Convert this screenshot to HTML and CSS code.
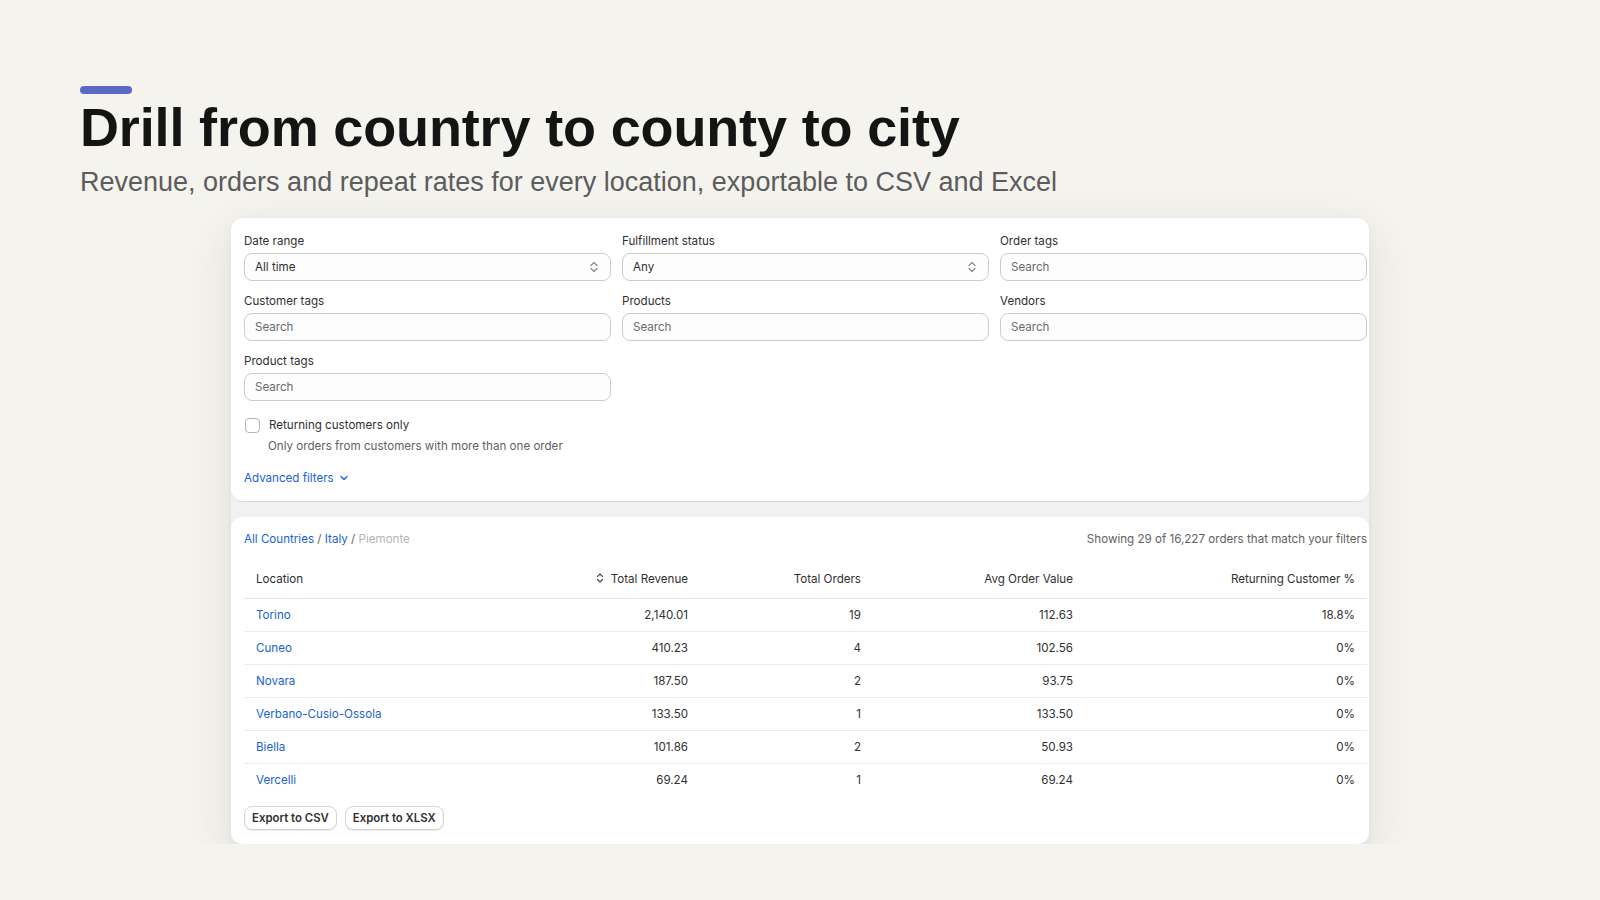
FILE: index.html
```html
<!DOCTYPE html>
<html lang="en">
<head>
    <meta charset="UTF-8">
    <meta name="viewport" content="width=device-width, initial-scale=1.0">
    <title>Drill from country to county to city</title>
    <link rel="stylesheet" href="styles.css">
</head>
<body>
    <div class="hero">
        <div class="accent"></div>
        <h1>Drill from country to county to city</h1>
        <p class="subtitle">Revenue, orders and repeat rates for every location, exportable to CSV and Excel</p>
    </div>

    <div class="frame">
        <div class="filters">
            <div class="filter-grid">
                <div class="field">
                    <label>Date range</label>
                    <div class="input select">
                        <span class="value">All time</span>
                        <svg class="updown" width="8" height="12" viewBox="0 0 8 12"><path d="M1 4.5 4 1.5 7 4.5M1 7.5 4 10.5 7 7.5" fill="none" stroke="#8a8a8a" stroke-width="1.2" stroke-linecap="round" stroke-linejoin="round"/></svg>
                    </div>
                </div>
                <div class="field">
                    <label>Fulfillment status</label>
                    <div class="input select">
                        <span class="value">Any</span>
                        <svg class="updown" width="8" height="12" viewBox="0 0 8 12"><path d="M1 4.5 4 1.5 7 4.5M1 7.5 4 10.5 7 7.5" fill="none" stroke="#8a8a8a" stroke-width="1.2" stroke-linecap="round" stroke-linejoin="round"/></svg>
                    </div>
                </div>
                <div class="field">
                    <label>Order tags</label>
                    <div class="input"><span class="placeholder">Search</span></div>
                </div>
                <div class="field">
                    <label>Customer tags</label>
                    <div class="input"><span class="placeholder">Search</span></div>
                </div>
                <div class="field">
                    <label>Products</label>
                    <div class="input"><span class="placeholder">Search</span></div>
                </div>
                <div class="field">
                    <label>Vendors</label>
                    <div class="input"><span class="placeholder">Search</span></div>
                </div>
                <div class="field">
                    <label>Product tags</label>
                    <div class="input"><span class="placeholder">Search</span></div>
                </div>
            </div>

            <div class="check-row">
                <span class="checkbox"></span>
                <span>Returning customers only</span>
            </div>
            <div class="help">Only orders from customers with more than one order</div>

            <a class="advanced" href="#">Advanced filters
                <svg width="12" height="12" viewBox="0 0 12 12"><path d="M3 4.5 6 7.5 9 4.5" fill="none" stroke="#1a62d6" stroke-width="1.3" stroke-linecap="round" stroke-linejoin="round"/></svg>
            </a>
        </div>

        <div class="results">
            <div class="results-top">
                <div class="crumbs">
                    <a href="#">All Countries</a> <span class="sep">/</span> <a href="#">Italy</a> <span class="sep">/</span> <span class="current">Piemonte</span>
                </div>
                <div class="count">Showing 29 of 16,227 orders that match your filters</div>
            </div>

            <table class="report">
                <colgroup>
                    <col style="width: 300px">
                    <col style="width: 156px">
                    <col style="width: 173px">
                    <col style="width: 212px">
                    <col style="width: 282px">
                </colgroup>
                <thead>
                    <tr>
                        <th class="left">Location</th>
                        <th>
                            <svg class="sort" width="8" height="12" viewBox="0 0 8 12"><path d="M1.5 4.5 4 2 6.5 4.5M1.5 7.5 4 10 6.5 7.5" fill="none" stroke="#4a4a4a" stroke-width="1.1" stroke-linecap="round" stroke-linejoin="round"/></svg>
                            Total Revenue
                        </th>
                        <th>Total Orders</th>
                        <th>Avg Order Value</th>
                        <th>Returning Customer %</th>
                    </tr>
                </thead>
                <tbody>
                    <tr><td class="left"><a href="#">Torino</a></td><td>2,140.01</td><td>19</td><td>112.63</td><td>18.8%</td></tr>
                    <tr><td class="left"><a href="#">Cuneo</a></td><td>410.23</td><td>4</td><td>102.56</td><td>0%</td></tr>
                    <tr><td class="left"><a href="#">Novara</a></td><td>187.50</td><td>2</td><td>93.75</td><td>0%</td></tr>
                    <tr><td class="left"><a href="#">Verbano-Cusio-Ossola</a></td><td>133.50</td><td>1</td><td>133.50</td><td>0%</td></tr>
                    <tr><td class="left"><a href="#">Biella</a></td><td>101.86</td><td>2</td><td>50.93</td><td>0%</td></tr>
                    <tr><td class="left"><a href="#">Vercelli</a></td><td>69.24</td><td>1</td><td>69.24</td><td>0%</td></tr>
                </tbody>
            </table>

            <div class="actions">
                <button type="button">Export to CSV</button>
                <button type="button">Export to XLSX</button>
            </div>
        </div>
    </div>
</body>
</html>
```

FILE: styles.css
```css
body {
    margin: 0;
    background-color: #f4f3ee;
    font-family: Inter, "Noto Sans", sans-serif;
    color: #303030;
}
.hero {
    padding: 86px 0 0 80px;
}
.accent {
    width: 52px;
    height: 8px;
    border-radius: 4px;
    background-color: #5c6ac4;
}
.hero h1 {
    margin: 3px 0 0 0;
    font-family: "Liberation Sans", Arial, sans-serif;
    font-size: 54px;
    line-height: 60px;
    font-weight: bold;
    letter-spacing: -0.15px;
    color: #141414;
}
.subtitle {
    margin: 9px 0 0 0;
    font-family: "Liberation Sans", Arial, sans-serif;
    font-size: 27px;
    line-height: 32px;
    color: #5c5c5c;
}
.frame {
    width: 1138px;
    margin: 20px 0 0 231px;
    background-color: #f1f1f1;
    border-radius: 12px;
    overflow: hidden;
    box-shadow: 0 14px 44px rgba(60, 50, 30, 0.11), 0 2px 6px rgba(0, 0, 0, 0.04);
}
.filters {
    background-color: #fff;
    padding: 15px 0 13px 13px;
    border-radius: 0 0 12px 12px;
    border-bottom: 1px solid #d9d9d9;
    font-size: 11.6px;
}
.filter-grid {
    display: grid;
    grid-template-columns: 367px 367px 367px;
    column-gap: 11px;
    row-gap: 12px;
}
.field label {
    display: block;
    line-height: 16px;
    margin-bottom: 4px;
    color: #303030;
}
.input {
    box-sizing: border-box;
    height: 28px;
    border: 1px solid #cccccc;
    border-radius: 8px;
    background-color: #fdfdfd;
    padding: 0 10px;
    display: flex;
    align-items: center;
    justify-content: space-between;
}
.input .value {
    color: #303030;
}
.input .placeholder {
    color: #6b6b6b;
}
.updown {
    margin-right: 2px;
}
.check-row {
    display: flex;
    align-items: center;
    gap: 9px;
    margin-top: 14px;
    line-height: 20px;
}
.checkbox {
    box-sizing: border-box;
    width: 15px;
    height: 15px;
    margin-left: 1px;
    border: 1px solid #b5b5b5;
    border-radius: 4px;
    background-color: #fff;
}
.help {
    padding-left: 24px;
    margin-top: 1px;
    line-height: 20px;
    color: #616161;
}
.advanced {
    display: inline-flex;
    align-items: center;
    gap: 4px;
    margin-top: 12px;
    line-height: 20px;
    color: #1a62d6;
    text-decoration: none;
}
.results {
    margin-top: 15px;
    background-color: #fff;
    border-radius: 12px 12px 0 0;
    padding: 12px 2px 14px 13px;
    font-size: 11.6px;
}
.results-top {
    display: flex;
    justify-content: space-between;
    line-height: 20px;
}
.crumbs a {
    color: #1a62d6;
    text-decoration: none;
}
.crumbs .sep {
    color: #616161;
}
.crumbs .current {
    color: #b5b5b5;
}
.count {
    color: #616161;
}
.report {
    margin-top: 10px;
    width: 1123px;
    border-collapse: collapse;
    table-layout: fixed;
}
.report th {
    height: 39px;
    padding: 0 12px;
    text-align: right;
    font-weight: normal;
    color: #303030;
    border-bottom: 1px solid #e3e3e3;
    white-space: nowrap;
}
.report td {
    height: 32px;
    padding: 0 12px;
    text-align: right;
    color: #303030;
    border-bottom: 1px solid #ebebeb;
}
.report tbody tr:last-child td {
    border-bottom: none;
}
.report .left {
    text-align: left;
}
.report td a {
    color: #1a62d6;
    text-decoration: none;
}
.sort {
    margin-right: 3px;
    vertical-align: -1px;
}
.actions {
    display: flex;
    gap: 8px;
    margin-top: 10px;
}
.actions button {
    height: 24px;
    padding: 0 7px;
    font-family: Inter, "Noto Sans", sans-serif;
    font-size: 11.4px;
    font-weight: 600;
    color: #303030;
    background-color: #fff;
    border: 1px solid #d4d4d4;
    border-radius: 8px;
    box-shadow: 0 1px 0 rgba(0, 0, 0, 0.08);
    cursor: pointer;
}
```
